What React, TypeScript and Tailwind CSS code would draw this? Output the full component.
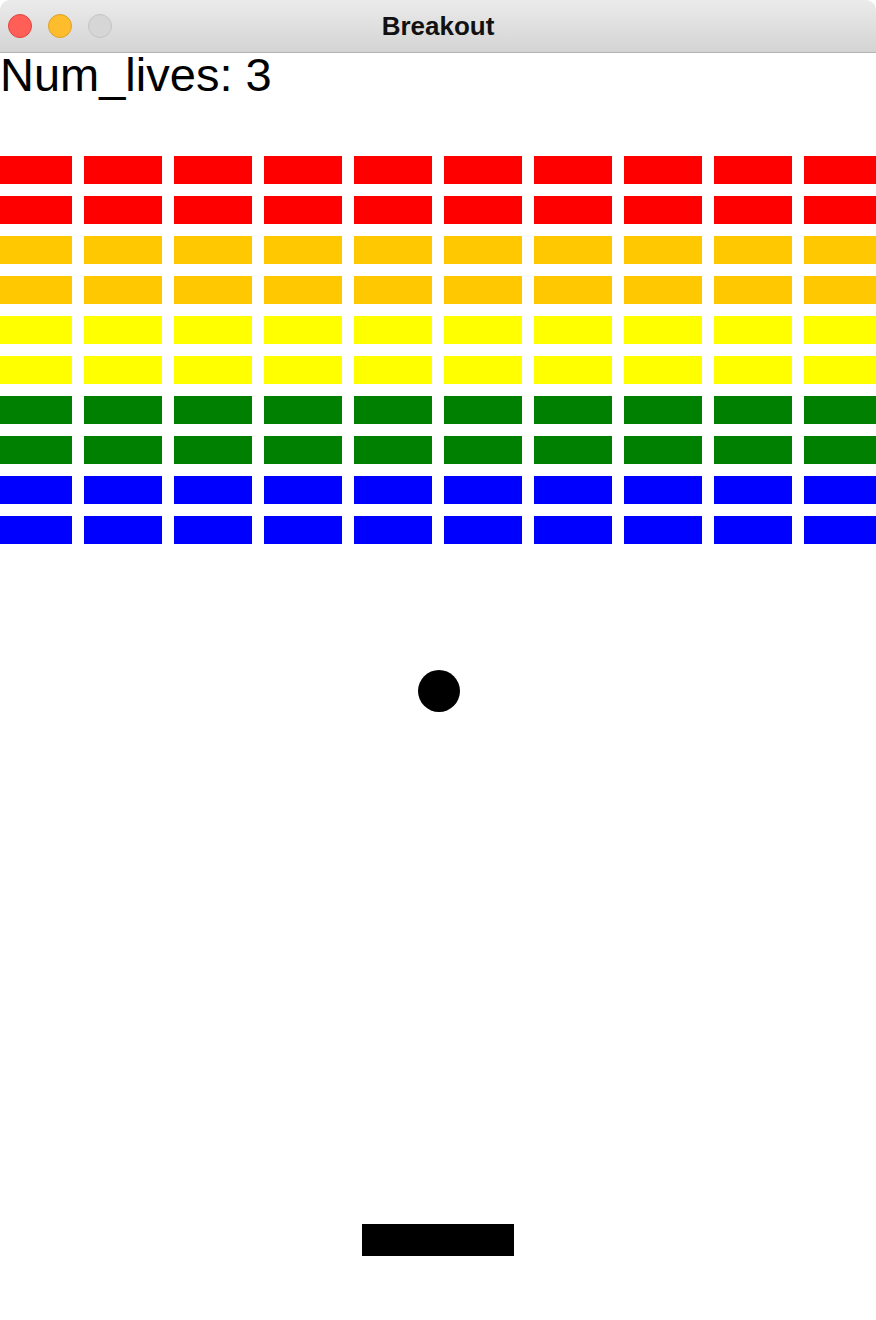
const ROWS = [
  "bg-[#ff0000]",
  "bg-[#ff0000]",
  "bg-[#ffc800]",
  "bg-[#ffc800]",
  "bg-[#ffff00]",
  "bg-[#ffff00]",
  "bg-[#008000]",
  "bg-[#008000]",
  "bg-[#0000ff]",
  "bg-[#0000ff]",
];

const COLS = 10;

function TitleBar() {
  return (
    <div className="relative flex h-[53px] items-center rounded-t-[10px] border-b border-[#b4b4b4] bg-gradient-to-b from-[#ebebeb] to-[#d4d4d4]">
      <div className="flex items-center gap-4 pl-2">
        <span className="h-6 w-6 rounded-full border border-[#e0443e] bg-[#ff5f57]" />
        <span className="h-6 w-6 rounded-full border border-[#dea123] bg-[#ffbd2e]" />
        <span className="h-6 w-6 rounded-full border border-[#c4c4c4] bg-[#d6d6d6]" />
      </div>
      <div className="absolute inset-0 flex items-center justify-center text-[26px] font-bold text-[#111]">
        Breakout
      </div>
    </div>
  );
}

export default function App() {
  return (
    <div className="h-[1320px] w-[876px] overflow-hidden bg-white font-['Liberation_Sans',Arial,sans-serif]">
      <TitleBar />

      {/* Game canvas */}
      <div className="relative h-[1267px] overflow-hidden bg-white">
        <div className="mt-[-3px] whitespace-nowrap text-[47px] leading-[50px] text-black">Num_lives: 3</div>

        {/* Bricks */}
        <div className="mt-[56px] ml-[-6px] flex w-[900px] flex-col gap-3">
          {ROWS.map((color, r) => (
            <div key={r} className="flex gap-3">
              {Array.from({ length: COLS }).map((_, c) => (
                <div key={c} className={`h-[28px] w-[78px] shrink-0 ${color}`} />
              ))}
            </div>
          ))}
        </div>

        {/* Ball */}
        <div className="absolute left-[418px] top-[617px] h-[42px] w-[42px] rounded-full bg-black" />

        {/* Paddle */}
        <div className="absolute left-[362px] top-[1171px] h-[32px] w-[152px] bg-black" />
      </div>
    </div>
  );
}
